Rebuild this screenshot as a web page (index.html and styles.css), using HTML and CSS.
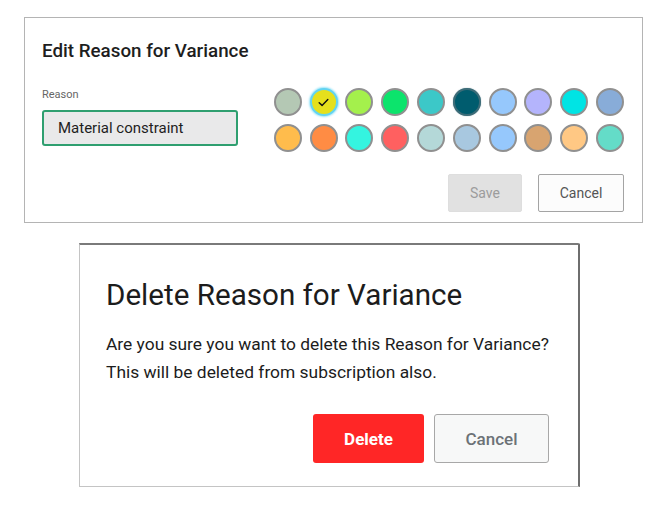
FILE: index.html
```html
<!DOCTYPE html>
<html>
<head>
<meta charset="utf-8">
<link rel="stylesheet" href="styles.css">
</head>
<body>
<section class="edit-card">
  <h2 class="edit-title">Edit Reason for Variance</h2>
  <div class="edit-row">
    <div class="field">
      <label class="field-label">Reason</label>
      <div class="field-input">Material constraint</div>
    </div>
    <div class="swatches">
      <span class="sw" style="background:#b4c8b4"></span>
      <span class="sw sel" style="background:#e5e01c"><svg viewBox="0 0 12 10" width="11" height="9"><path d="M1.2 5.2 L4.4 8.2 L10.8 1.6" fill="none" stroke="#111" stroke-width="1.6" stroke-linecap="round" stroke-linejoin="round"/></svg></span>
      <span class="sw" style="background:#a4f04c"></span>
      <span class="sw" style="background:#0ce46c"></span>
      <span class="sw" style="background:#3cc8c8"></span>
      <span class="sw dark" style="background:#005c6e"></span>
      <span class="sw" style="background:#96c8fc"></span>
      <span class="sw" style="background:#b4b4fc"></span>
      <span class="sw" style="background:#00e4e4"></span>
      <span class="sw" style="background:#88acd8"></span>
      <span class="sw" style="background:#ffbc4c"></span>
      <span class="sw" style="background:#ff8c44"></span>
      <span class="sw" style="background:#34f4e0"></span>
      <span class="sw" style="background:#ff6060"></span>
      <span class="sw" style="background:#b4d8d8"></span>
      <span class="sw" style="background:#a8c8e0"></span>
      <span class="sw" style="background:#96c8fc"></span>
      <span class="sw" style="background:#d8a470"></span>
      <span class="sw" style="background:#ffc884"></span>
      <span class="sw" style="background:#64dcc8"></span>
    </div>
  </div>
  <div class="edit-actions">
    <button class="btn-save">Save</button>
    <button class="btn-cancel-sm">Cancel</button>
  </div>
</section>

<section class="del-card">
  <h2 class="del-title">Delete Reason for Variance</h2>
  <p class="del-text">Are you sure you want to delete this Reason for Variance?<br>This will be deleted from subscription also.</p>
  <div class="del-actions">
    <button class="btn-delete">Delete</button>
    <button class="btn-cancel">Cancel</button>
  </div>
</section>
</body>
</html>
```

FILE: styles.css
```css
* { box-sizing: border-box; }
html, body { margin: 0; padding: 0; background: #fff; }
body { font-family: Roboto, "Liberation Sans", sans-serif; color: #222; padding-top: 17px; }

.edit-card {
  margin-left: 24px;
  width: 619px;
  height: 206px;
  border: 1px solid #b4b4b4;
  padding: 21px 18px 10px 17px;
  display: flex;
  flex-direction: column;
}
.edit-title {
  margin: 0;
  font-size: 18.8px;
  line-height: 24px;
  font-weight: 500;
  color: #1e1e1e;
}
.edit-row {
  margin-top: 25px;
  display: flex;
  gap: 36px;
}
.field { width: 197px; display: flex; flex-direction: column; }
.field-label {
  font-size: 11px;
  line-height: 14px;
  color: #666;
}
.field-input {
  margin-top: 8px;
  height: 36px;
  border: 2px solid #2f9f70;
  border-radius: 3px;
  background: #e9e9ea;
  padding-left: 14px;
  font-size: 15px;
  line-height: 32px;
  color: #1e1e1e;
}
.swatches {
  display: grid;
  grid-template-columns: repeat(10, 28px);
  column-gap: 7.8px;
  row-gap: 8px;
}
.sw {
  width: 28px;
  height: 28px;
  border-radius: 50%;
  border: 2px solid #909090;
  display: flex;
  align-items: center;
  justify-content: center;
}
.sw.sel {
  border-color: #62d4f1;
  box-shadow: 0 0 2px 1px #9ae4f8;
}
.sw.dark { border-color: #3c6c78; box-shadow: 0 0 1px #5a7e88; }

.edit-actions {
  margin-top: 22px;
  display: flex;
  justify-content: flex-end;
  gap: 16px;
}
.btn-save, .btn-cancel-sm {
  font-family: Roboto, "Liberation Sans", sans-serif;
  font-size: 14px;
  height: 38px;
  border-radius: 2px;
  padding: 0;
}
.btn-save {
  width: 74px;
  background: #e1e1e1;
  border: 1px solid #dedede;
  color: #9c9c9c;
}
.btn-cancel-sm {
  width: 86px;
  background: #fcfcfc;
  border: 1px solid #a4a4a4;
  color: #555;
}

.del-card {
  margin-top: 20px;
  margin-left: 79px;
  width: 501px;
  height: 244px;
  border: 1px solid #c4c4c4;
  border-top: 2px solid #7a7a7a;
  border-right: 2px solid #6e6e6e;
  border-top-right-radius: 2px;
  padding: 34px 29px 23px 26px;
  display: flex;
  flex-direction: column;
}
.del-title {
  margin: 0;
  font-size: 29.6px;
  line-height: 32px;
  font-weight: 400;
  color: #1c1c1c;
}
.del-text {
  margin: 19px 0 0;
  font-size: 17.4px;
  line-height: 28px;
  color: #1c1c1c;
}
.del-actions {
  margin-top: 28px;
  display: flex;
  justify-content: flex-end;
  gap: 10px;
}
.btn-delete, .btn-cancel {
  font-family: Roboto, "Liberation Sans", sans-serif;
  font-size: 17px;
  height: 49px;
  border-radius: 3px;
  padding: 0;
}
.btn-delete {
  width: 111px;
  background: #ff2626;
  border: none;
  color: #fff;
  font-weight: 700;
}
.btn-cancel {
  width: 115px;
  background: #f7f8f8;
  border: 1px solid #a8a8a8;
  color: #6c7277;
  font-weight: 500;
}
```
